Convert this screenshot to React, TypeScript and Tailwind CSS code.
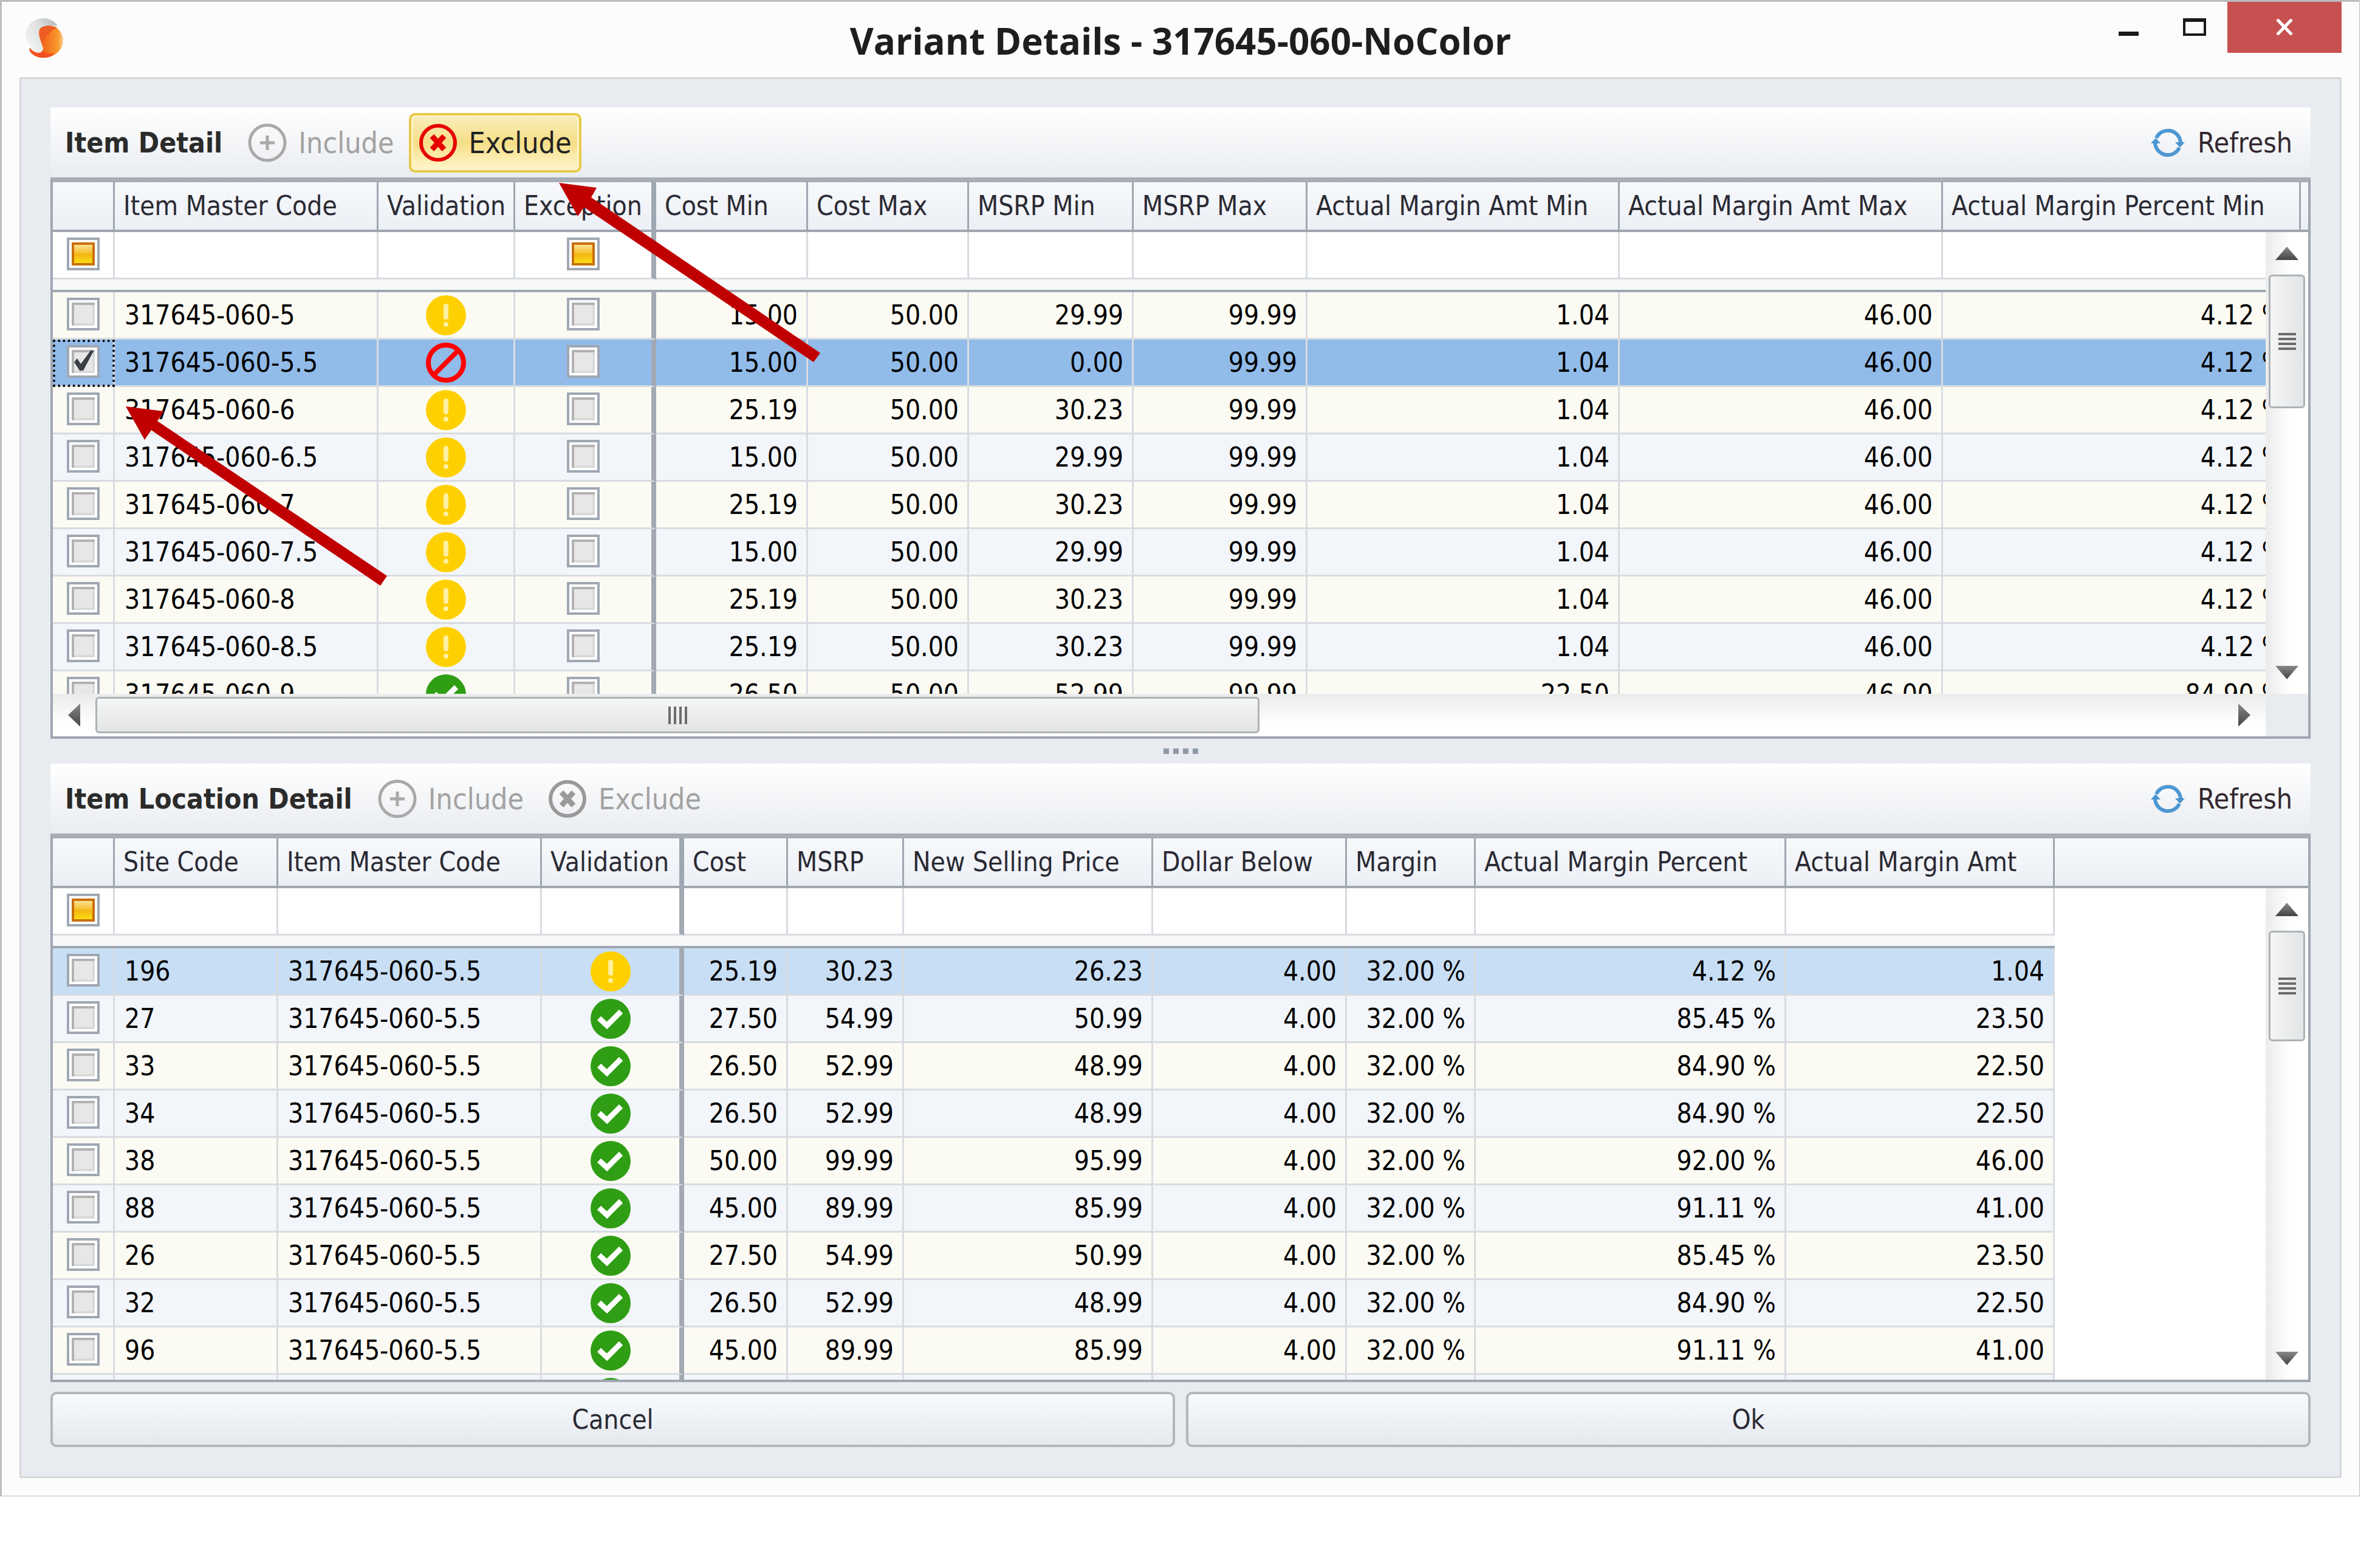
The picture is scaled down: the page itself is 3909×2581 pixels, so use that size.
import React from "react";

type Status = "warn" | "blocked" | "ok";

type Column = {
  label: string;
  width: string;
  kind: "check" | "text" | "number" | "status";
  thick?: boolean;
  filterCheck?: boolean;
  wide?: boolean;
};

type Row = { cells: (string | Status | boolean)[]; tone?: "selected" | "hover" };

const itemColumns: Column[] = [
  { label: "", width: "w-[102px]", kind: "check", filterCheck: true },
  { label: "Item Master Code", width: "w-[434px]", kind: "text" },
  { label: "Validation", width: "w-[225px]", kind: "status" },
  { label: "Exception", width: "w-[232px]", kind: "check", thick: true, filterCheck: true },
  { label: "Cost Min", width: "w-[250px]", kind: "number" },
  { label: "Cost Max", width: "w-[265px]", kind: "number" },
  { label: "MSRP Min", width: "w-[271px]", kind: "number" },
  { label: "MSRP Max", width: "w-[286px]", kind: "number" },
  { label: "Actual Margin Amt Min", width: "w-[514px]", kind: "number" },
  { label: "Actual Margin Amt Max", width: "w-[532px]", kind: "number" },
  { label: "Actual Margin Percent Min", width: "w-[589px]", kind: "number", wide: true },
];

const itemRow = (
  code: string,
  status: Status,
  costMin: string,
  msrpMin: string,
  amtMin = "1.04",
  pct = "4.12 %",
  checked = false,
): Row => ({
  cells: [checked, code, status, false, costMin, "50.00", msrpMin, "99.99", amtMin, "46.00", pct],
  tone: checked ? "selected" : undefined,
});

const itemRows: Row[] = [
  itemRow("317645-060-5", "warn", "15.00", "29.99"),
  itemRow("317645-060-5.5", "blocked", "15.00", "0.00", "1.04", "4.12 %", true),
  itemRow("317645-060-6", "warn", "25.19", "30.23"),
  itemRow("317645-060-6.5", "warn", "15.00", "29.99"),
  itemRow("317645-060-7", "warn", "25.19", "30.23"),
  itemRow("317645-060-7.5", "warn", "15.00", "29.99"),
  itemRow("317645-060-8", "warn", "25.19", "30.23"),
  itemRow("317645-060-8.5", "warn", "25.19", "30.23"),
  itemRow("317645-060-9", "ok", "26.50", "52.99", "22.50", "84.90 %"),
];

const locationColumns: Column[] = [
  { label: "", width: "w-[102px]", kind: "check", filterCheck: true },
  { label: "Site Code", width: "w-[269px]", kind: "text" },
  { label: "Item Master Code", width: "w-[434px]", kind: "text" },
  { label: "Validation", width: "w-[234px]", kind: "status", thick: true },
  { label: "Cost", width: "w-[171px]", kind: "number" },
  { label: "MSRP", width: "w-[191px]", kind: "number" },
  { label: "New Selling Price", width: "w-[410px]", kind: "number" },
  { label: "Dollar Below", width: "w-[319px]", kind: "number" },
  { label: "Margin", width: "w-[212px]", kind: "number" },
  { label: "Actual Margin Percent", width: "w-[511px]", kind: "number" },
  { label: "Actual Margin Amt", width: "w-[442px]", kind: "number" },
];

const locationRow = (
  site: string,
  cost: string,
  msrp: string,
  price: string,
  pct: string,
  amt: string,
  status: Status = "ok",
): Row => ({
  cells: [false, site, "317645-060-5.5", status, cost, msrp, price, "4.00", "32.00 %", pct, amt],
  tone: status === "warn" ? "hover" : undefined,
});

const locationRows: Row[] = [
  locationRow("196", "25.19", "30.23", "26.23", "4.12 %", "1.04", "warn"),
  locationRow("27", "27.50", "54.99", "50.99", "85.45 %", "23.50"),
  locationRow("33", "26.50", "52.99", "48.99", "84.90 %", "22.50"),
  locationRow("34", "26.50", "52.99", "48.99", "84.90 %", "22.50"),
  locationRow("38", "50.00", "99.99", "95.99", "92.00 %", "46.00"),
  locationRow("88", "45.00", "89.99", "85.99", "91.11 %", "41.00"),
  locationRow("26", "27.50", "54.99", "50.99", "85.45 %", "23.50"),
  locationRow("32", "26.50", "52.99", "48.99", "84.90 %", "22.50"),
  locationRow("96", "45.00", "89.99", "85.99", "91.11 %", "41.00"),
  { cells: [false, "", "", "ok", "", "", "", "", "", "", ""] },
];

function StatusIcon({ status }: { status: Status }) {
  return (
    <svg viewBox="0 0 66 66" className="mx-auto block size-[66px]" role="img" aria-label={status}>
      {status === "warn" && (
        <>
          <circle cx="33" cy="33" r="33" fill="#ffd000" />
          <rect x="29" y="14" width="8" height="26" rx="4" fill="#fff0a0" />
          <circle cx="33" cy="48" r="4" fill="#fff0a0" />
        </>
      )}
      {status === "blocked" && (
        <g fill="none" stroke="#ff0000" strokeWidth="8">
          <circle cx="33" cy="33" r="29" />
          <path d="M13 53 L53 13" />
        </g>
      )}
      {status === "ok" && (
        <>
          <circle cx="33" cy="33" r="33" fill="#2f9e14" />
          <path d="M14 32 L27 44 L50 21" fill="none" stroke="#fff" strokeWidth="9" />
        </>
      )}
    </svg>
  );
}

function CheckBox({ checked = false, mixed = false, label }: { checked?: boolean; mixed?: boolean; label: string }) {
  return (
    <span className="mx-auto mb-1 grid size-[54px]">
      <input
        type="checkbox"
        defaultChecked={checked}
        aria-label={label}
        className="col-start-1 row-start-1 size-[54px] appearance-none border-4 border-[#9fa7b2] bg-white"
      />
      <svg viewBox="0 0 54 54" className="pointer-events-none col-start-1 row-start-1 size-[54px]">
        {mixed ? (
          <>
            <defs>
              <linearGradient id="amber" x1="0" y1="0" x2="0" y2="1">
                <stop offset="0" stopColor="#fbe7a0" />
                <stop offset="0.45" stopColor="#f8c030" />
                <stop offset="0.5" stopColor="#f4b414" />
                <stop offset="1" stopColor="#fbe312" />
              </linearGradient>
            </defs>
            <rect x="10" y="10" width="34" height="34" fill="url(#amber)" stroke="#c96f0c" strokeWidth="4" />
          </>
        ) : (
          <>
            <rect x="8" y="8" width="38" height="38" fill="#e7e7e7" />
            <path d="M10 46 V10 H46" fill="none" stroke="#b2b2b2" strokeWidth="4" />
            <path d="M44 12 V44 H12" fill="none" stroke="#d6d6d6" strokeWidth="3" />
          </>
        )}
        {checked && <path d="M12 28 L17 22 L23 31 L40 8 L44 10 L27 42 L21 42 Z" fill="#3a4046" />}
      </svg>
    </span>
  );
}

function DataGrid({ columns, rows, caption }: { columns: Column[]; rows: Row[]; caption: string }) {
  return (
    <table aria-label={caption} className="w-full table-fixed border-separate border-spacing-0 whitespace-nowrap">
      <thead>
        <tr>
          {columns.map((c, i) => (
            <th
              key={i}
              scope="col"
              className={`${c.width} ${c.thick ? "border-r-8" : "border-r-[3px]"} h-[82px] border-b-4 border-[#9fa7b2] bg-linear-to-b from-[#f7f9fb] to-[#eceff5] p-0 pl-[14px] text-left font-normal text-[#2a2a33]`}
            >
              {c.label}
            </th>
          ))}
          <th className="h-[82px] border-b-4 border-[#9fa7b2] bg-linear-to-b from-[#f7f9fb] to-[#eceff5] p-0" />
        </tr>
      </thead>
      <tbody>
        <tr>
          {columns.map((c, i) => (
            <td
              key={i}
              className={`${c.thick ? "border-r-8 border-r-[#a3a9b3]" : "border-r-[3px] border-r-[#d8dce1]"} h-[78px] border-b-[3px] border-b-[#d8dce1] bg-white p-0`}
            >
              {c.filterCheck && <CheckBox mixed label={`Filter ${c.label || "selection"}`} />}
            </td>
          ))}
          <td className="bg-white p-0" />
        </tr>
        <tr>
          <td colSpan={columns.length} className="h-[21px] border-b-4 border-[#9fa7b2] bg-[#f6f8fa] p-0" />
          <td className="bg-white p-0" />
        </tr>
        {rows.map((row, r) => {
          const bg =
            row.tone === "selected"
              ? "bg-[#91bbe9]"
              : row.tone === "hover"
                ? "bg-[#c8def4]"
                : r % 2 === 0
                  ? "bg-[#fcfbf3]"
                  : "bg-[#f2f5fa]";
          return (
            <tr key={r}>
              {columns.map((c, i) => {
                const v = row.cells[i];
                const focused = row.tone === "selected" && i === 0;
                const align =
                  c.kind === "number" ? (c.wide ? "pr-6 text-right" : "pr-[14px] text-right") : c.kind === "text" ? "pl-4" : "";
                return (
                  <td
                    key={i}
                    className={`${bg} ${c.thick ? "border-r-8 border-r-[#a3a9b3]" : "border-r-[3px] border-r-[#d8dce1]"} h-[78px] border-b-[3px] border-b-[#d8dce1] p-0 text-black ${align} ${
                      focused ? "outline-4 -outline-offset-4 outline-dotted outline-black" : ""
                    }`}
                  >
                    {c.kind === "status" ? (
                      <StatusIcon status={v as Status} />
                    ) : c.kind === "check" ? (
                      <CheckBox checked={v as boolean} label={`${c.label || "Select"} ${row.cells[1]}`} />
                    ) : (
                      v
                    )}
                  </td>
                );
              })}
              <td className="bg-white p-0" />
            </tr>
          );
        })}
      </tbody>
    </table>
  );
}

function Triangle({ dir }: { dir: "up" | "down" | "left" | "right" }) {
  const d = {
    up: "M0 22 L19 0 L38 22 Z",
    down: "M0 0 L38 0 L19 22 Z",
    left: "M20 0 L20 38 L0 19 Z",
    right: "M0 0 L20 19 L0 38 Z",
  }[dir];
  const vertical = dir === "up" || dir === "down";
  return (
    <svg viewBox={vertical ? "0 0 38 22" : "0 0 20 38"} className={vertical ? "h-[22px] w-[38px]" : "h-[38px] w-[20px]"}>
      <defs>
        <linearGradient id={`tri-${dir}`} x1="0" y1="0" x2="0" y2="1">
          <stop offset="0" stopColor="#888" />
          <stop offset="1" stopColor="#444" />
        </linearGradient>
      </defs>
      <path d={d} fill={`url(#tri-${dir})`} />
    </svg>
  );
}

function VerticalScroll({ thumb }: { thumb: string }) {
  return (
    <div className="absolute top-[82px] right-0 bottom-0 flex w-[70px] flex-col items-center bg-linear-to-r from-[#ebebeb] to-white to-60%">
      <button type="button" aria-label="Scroll up" className="flex h-[70px] w-full items-center justify-center">
        <Triangle dir="up" />
      </button>
      <div
        className={`${thumb} flex w-[60px] flex-col items-center justify-center gap-1 rounded-md border-[3px] border-[#adb2b8] bg-linear-to-r from-[#f4f5f5] to-[#e2e4e5]`}
      >
        <span className="h-1 w-[29px] bg-[#6c6c6c]" />
        <span className="h-1 w-[29px] bg-[#6c6c6c]" />
        <span className="h-1 w-[29px] bg-[#6c6c6c]" />
        <span className="h-1 w-[29px] bg-[#6c6c6c]" />
      </div>
      <button type="button" aria-label="Scroll down" className="mt-auto flex h-[70px] w-full items-center justify-center">
        <Triangle dir="down" />
      </button>
    </div>
  );
}

function HorizontalScroll() {
  return (
    <div className="flex h-[70px]">
      <div className="flex flex-1 items-center bg-linear-to-b from-[#ebebeb] to-white to-70%">
        <button type="button" aria-label="Scroll left" className="flex h-full w-[70px] items-center justify-center">
          <Triangle dir="left" />
        </button>
        <div className="flex h-[60px] w-[1916px] items-center justify-center gap-[5px] rounded-md border-[3px] border-[#adb2b8] bg-linear-to-b from-[#f4f5f5] to-[#e4e5e5]">
          <span className="h-[29px] w-1 bg-[#6c6c6c]" />
          <span className="h-[29px] w-1 bg-[#6c6c6c]" />
          <span className="h-[29px] w-1 bg-[#6c6c6c]" />
          <span className="h-[29px] w-1 bg-[#6c6c6c]" />
        </div>
        <button type="button" aria-label="Scroll right" className="ml-auto flex h-full w-[70px] items-center justify-center">
          <Triangle dir="right" />
        </button>
      </div>
      <div className="w-[70px] bg-[#e8ebf0]" />
    </div>
  );
}

function PlusCircle() {
  return (
    <svg viewBox="0 0 64 64" className="size-16" fill="none" stroke="#a9a9a9">
      <circle cx="32" cy="32" r="29" strokeWidth="5" />
      <path d="M32 20 V44 M20 32 H44" strokeWidth="5" />
    </svg>
  );
}

function CrossCircle({ color }: { color: string }) {
  return (
    <svg viewBox="0 0 64 64" className="size-16" fill="none" stroke={color}>
      <circle cx="32" cy="32" r="28" strokeWidth="6" />
      <path d="M22 21 L42 43 M42 21 L22 43" strokeWidth="9" />
    </svg>
  );
}

function RefreshIcon() {
  return (
    <svg viewBox="0 0 56 56" className="size-14" fill="none" stroke="#4c97d2" strokeWidth="6">
      <path d="M9 20 A21 21 0 0 1 49 28" />
      <path d="M47 36 A21 21 0 0 1 7 28" />
      <path d="M40 27 H56 L48 36 Z" fill="#4c97d2" stroke="none" />
      <path d="M0 29 H16 L8 20 Z" fill="#4c97d2" stroke="none" />
    </svg>
  );
}

function Toolbar({ title, active }: { title: string; active: boolean }) {
  return (
    <div className="flex h-[115px] items-center bg-linear-to-b from-white to-[#e9ecf0] pl-6 text-[48px]">
      <h2 className="mr-[26px] text-[46px] font-bold text-[#2b2b2b]">{title}</h2>
      <button type="button" disabled className="mr-2 flex h-[98px] items-center gap-[19px] px-4 text-[#a2a2a2]">
        <PlusCircle />
        Include
      </button>
      {active ? (
        <button
          type="button"
          className="flex h-[98px] items-center gap-[19px] rounded-[10px] border-4 border-[#eac94a] bg-linear-to-b from-[#f9eebc] via-[#f6de86] to-[#fff6cc] px-3 text-[#222] shadow-[inset_0_0_0_3px_#fdf3c8]"
        >
          <CrossCircle color="#e60000" />
          Exclude
        </button>
      ) : (
        <button type="button" disabled className="flex h-[98px] items-center gap-[19px] px-4 text-[#a2a2a2]">
          <CrossCircle color="#9a9a9a" />
          Exclude
        </button>
      )}
      <button type="button" className="mr-[30px] ml-auto flex items-center gap-[21px] text-[46px] text-[#33272f]">
        <RefreshIcon />
        Refresh
      </button>
    </div>
  );
}

function Logo() {
  return (
    <svg viewBox="0 0 64 68" className="h-[68px] w-16">
      <defs>
        <linearGradient id="silver" x1="0" y1="0.6" x2="1" y2="0">
          <stop offset="0" stopColor="#f2f3f3" />
          <stop offset="0.5" stopColor="#dcdfdf" />
          <stop offset="1" stopColor="#b0b4b5" />
        </linearGradient>
        <linearGradient id="flame" x1="0" y1="0.5" x2="1" y2="0.5">
          <stop offset="0" stopColor="#f05a1a" />
          <stop offset="0.5" stopColor="#f3701e" />
          <stop offset="0.85" stopColor="#f99a2c" />
          <stop offset="1" stopColor="#fcd09a" />
        </linearGradient>
      </defs>
      <path d="M54 14 C46 1 30 -2 17 4 C3 11 -3 28 4 40 C7 46 12 42 8 52 C14 60 24 60 32 56 L26 20 C30 14 44 12 54 14 Z" fill="url(#silver)" />
      <path
        d="M53 17 C46 12 32 12 25 18 C20 27 27 40 30 50 C30 61 16 60 8 50 C5 55 15 67 33 66 C49 65 64 52 63 36 C62 27 58 21 52 17 Z"
        fill="url(#flame)"
      />
      <path d="M53 17 C44 12 32 12 25 18 C21 26 26 36 29 44 C34 28 44 20 53 17 Z" fill="#ee5d22" />
      <path d="M8 50 C5 55 15 67 33 66 C42 65 46 62 50 59 C40 60 32 58 30 53 C28 61 16 60 8 50 Z" fill="#f2501f" />
    </svg>
  );
}

export default function App() {
  return (
    <div className="min-h-screen bg-white font-['DejaVu_Sans_Condensed','DejaVu_Sans',sans-serif] text-[44px] leading-[52px]">
      <div className="relative mr-[25px] border border-t-[3px] border-l-[3px] border-[#bdbdbd] bg-[#fcfcfc]">
        <header className="grid h-[124px] grid-cols-[1fr_auto_1fr]">
          <div className="pt-[26px] pl-[38px]">
            <Logo />
          </div>
          <h1 className="pt-[26px] font-['Open_Sans',sans-serif] text-[60px] leading-[76px] font-bold text-[#1e1e1e]">
            Variant Details - 317645-060-NoColor
          </h1>
          <div className="mr-[29px] flex items-start justify-end">
            <button type="button" aria-label="Minimize" className="flex h-[84px] w-[110px] justify-center pt-[49px]">
              <span className="h-[7px] w-[33px] bg-[#1a1a1a]" />
            </button>
            <button type="button" aria-label="Maximize" className="flex h-[84px] w-[108px] justify-center pt-[27px]">
              <span className="h-[29px] w-[38px] border-4 border-t-[6px] border-[#1a1a1a]" />
            </button>
            <button type="button" aria-label="Close" className="flex h-[84px] w-[188px] justify-center bg-[#c75050] pt-7">
              <svg viewBox="0 0 30 27" className="h-[27px] w-[30px]" stroke="#fff" strokeWidth="5">
                <path d="M3 1 L27 26 M27 1 L3 26" />
              </svg>
            </button>
          </div>
        </header>
        <main className="mr-[29px] mb-[29px] ml-[29px] border-[3px] border-[#d6d8da] bg-[#e8ebf0] px-12 pt-[47px] pb-12">
          <section aria-label="Item Detail">
            <Toolbar title="Item Detail" active />
            <div className="border-x-4 border-t-8 border-b-4 border-[#9fa7b2] border-t-[#a8aeb6] bg-white">
              <div className="relative h-[842px] overflow-hidden">
                <DataGrid columns={itemColumns} rows={itemRows} caption="Item Detail" />
                <VerticalScroll thumb="h-[220px]" />
              </div>
              <HorizontalScroll />
            </div>
          </section>
          <div className="flex h-[41px] items-center justify-center gap-[7px]">
            <span className="size-[9px] bg-[#8e99a6]" />
            <span className="size-[9px] bg-[#8e99a6]" />
            <span className="size-[9px] bg-[#8e99a6]" />
            <span className="size-[9px] bg-[#8e99a6]" />
          </div>
          <section aria-label="Item Location Detail">
            <Toolbar title="Item Location Detail" active={false} />
            <div className="border-x-4 border-t-8 border-b-4 border-[#9fa7b2] border-t-[#a8aeb6] bg-white">
              <div className="relative h-[891px] overflow-hidden">
                <DataGrid columns={locationColumns} rows={locationRows} caption="Item Location Detail" />
                <VerticalScroll thumb="h-[182px]" />
              </div>
            </div>
          </section>
          <div className="mt-4 flex gap-[18px] text-[#2a2a33]">
            <button
              type="button"
              className="h-[91px] flex-1 rounded-[10px] border-4 border-[#b3b7bc] bg-linear-to-b from-[#f7fbff] to-[#e5e8ec]"
            >
              Cancel
            </button>
            <button
              type="button"
              className="h-[91px] flex-1 rounded-[10px] border-4 border-[#b3b7bc] bg-linear-to-b from-[#f7fbff] to-[#e5e8ec]"
            >
              Ok
            </button>
          </div>
        </main>
        <svg
          viewBox="0 0 1400 1000"
          className="pointer-events-none absolute -top-[3px] -left-[3px] h-[1000px] w-[1400px]"
          fill="#c00000"
          aria-hidden="true"
        >
          <path d="M920 301 L982 309 L973 325 L1350 581 L1339 596 L961 341 L951 356 Z" />
          <path d="M207 669 L270 677 L259 693 L637 948 L626 964 L249 708 L238 724 Z" />
        </svg>
      </div>
    </div>
  );
}
